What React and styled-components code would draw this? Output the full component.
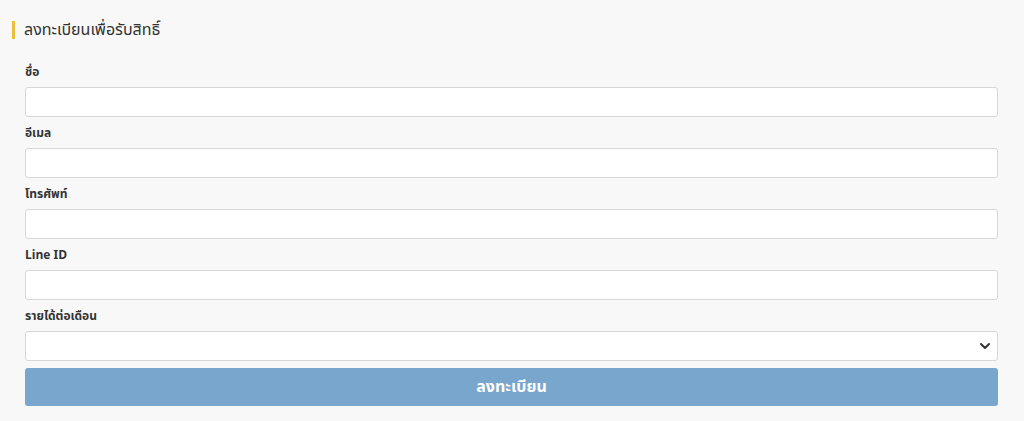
import React from "react";
import styled, { createGlobalStyle } from "styled-components";

const Global = createGlobalStyle`
  html, body { margin: 0; padding: 0; background: #f8f8f8; }
  body { font-family: Tahoma, "Noto Sans Thai", "Noto Sans", "DejaVu Sans", sans-serif; color: #333; }
  * { box-sizing: border-box; }
`;

const Page = styled.div`
  padding: 20px 26px 0 25px;
`;

const Title = styled.h2`
  margin: 0 0 23px -13px;
  padding-left: 9px;
  font-size: 16px;
  line-height: 20px;
  font-weight: normal;
  color: #333;
  border-left: 3px solid #e9bf3c;
  display: flex;
  align-items: center;
  height: 20px;
  border-image: linear-gradient(to bottom, transparent 2px, #e9bf3c 2px, #e9bf3c 18px, transparent 18px) 1;
`;

const Form = styled.form`
  display: flex;
  flex-direction: column;
  gap: 7px;
`;

const Field = styled.div`
  display: flex;
  flex-direction: column;
  gap: 6px;
`;

const Label = styled.label`
  font-size: 12px;
  font-weight: bold;
  line-height: 18px;
  color: #333;
`;

const Input = styled.input`
  height: 30px;
  width: 100%;
  border: 1px solid #d6d6d6;
  border-radius: 3px;
  background: #fff;
  padding: 0 8px;
  font: inherit;
`;

const SelectWrap = styled.div`
  position: relative;
`;

const Select = styled.select`
  appearance: none;
  height: 30px;
  width: 100%;
  border: 1px solid #d6d6d6;
  border-radius: 3px;
  background: #fff;
  padding: 0 8px;
  font: inherit;
`;

const Chevron = styled.svg`
  position: absolute;
  right: 7px;
  top: 10px;
  pointer-events: none;
`;

const Button = styled.button`
  height: 38px;
  width: 100%;
  border: none;
  border-radius: 3px;
  background: #78a6cd;
  color: #fff;
  font: inherit;
  font-size: 16px;
  font-weight: bold;
  cursor: pointer;
`;

const fields = ["ชื่อ", "อีเมล", "โทรศัพท์", "Line ID"];

export default function App() {
  return (
    <>
      <Global />
      <Page>
        <Title>ลงทะเบียนเพื่อรับสิทธิ์</Title>
        <Form onSubmit={(e) => e.preventDefault()}>
          {fields.map((f) => (
            <Field key={f}>
              <Label>{f}</Label>
              <Input type="text" />
            </Field>
          ))}
          <Field>
            <Label>รายได้ต่อเดือน</Label>
            <SelectWrap>
              <Select defaultValue="">
                <option value=""></option>
              </Select>
              <Chevron width="12" height="10" viewBox="0 0 12 10">
                <path d="M2 3 L6 7 L10 3" fill="none" stroke="#333" strokeWidth="2" strokeLinecap="round" strokeLinejoin="round" />
              </Chevron>
            </SelectWrap>
          </Field>
          <Button type="submit">ลงทะเบียน</Button>
        </Form>
      </Page>
    </>
  );
}
